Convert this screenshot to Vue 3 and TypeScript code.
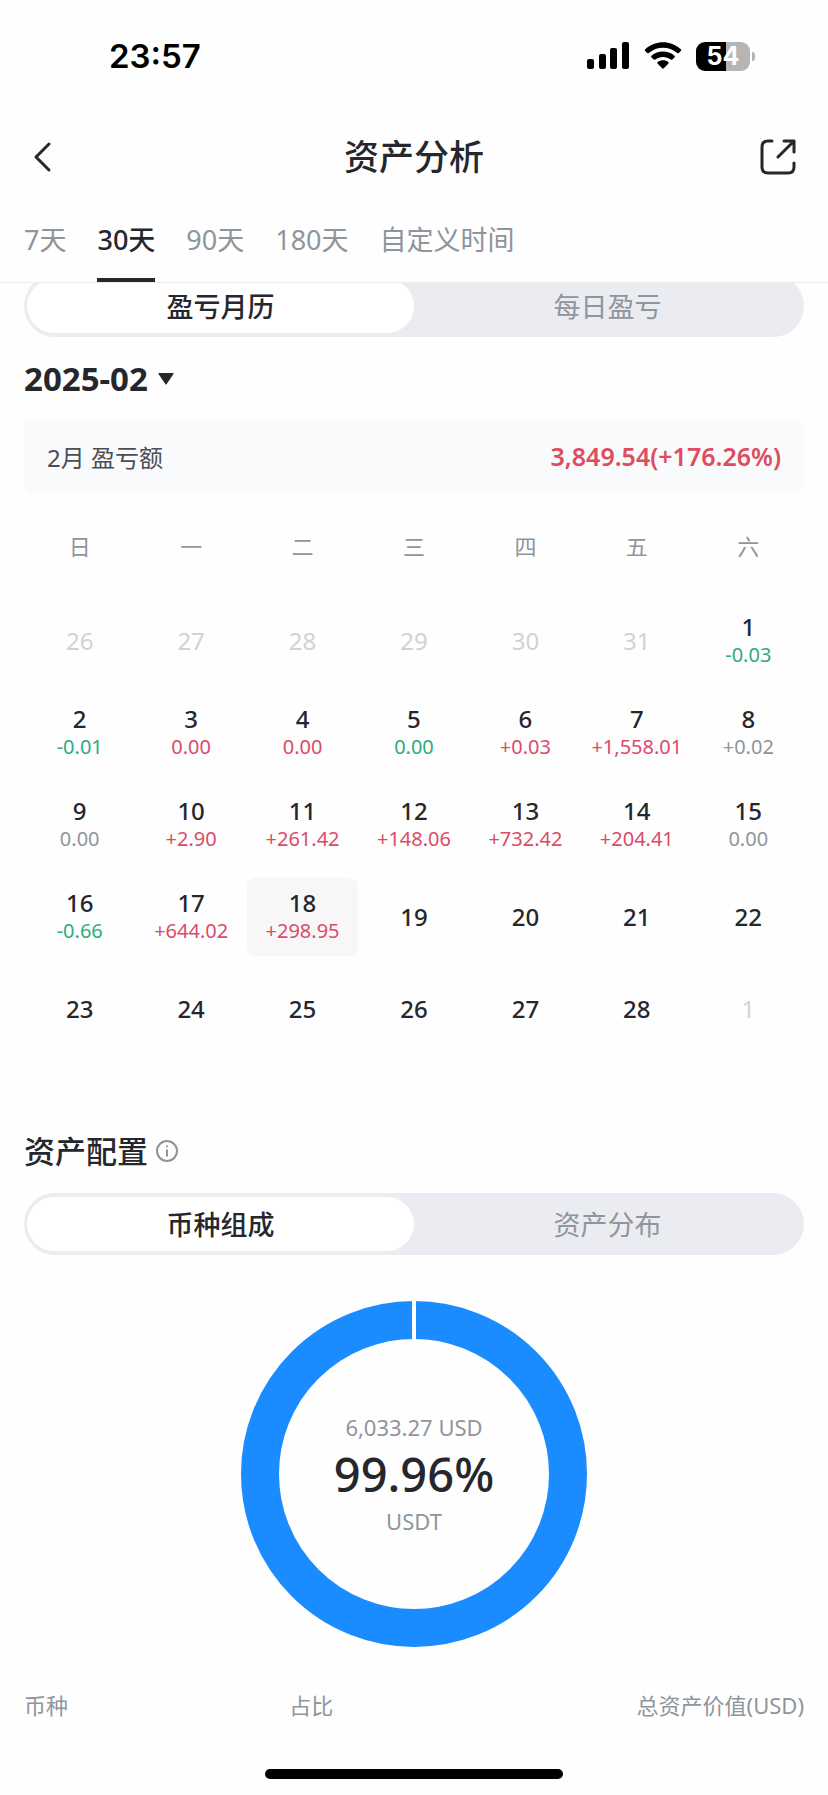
<script setup lang="ts">
import { ref } from 'vue'

type Tone = 'up' | 'down' | 'flat'
interface Day {
  day: number
  amount?: string
  tone?: Tone
  outside?: boolean
}

const ranges = ['7天', '30天', '90天', '180天', '自定义时间']
const activeRange = ref('30天')

const profitViews = ['盈亏月历', '每日盈亏']
const activeProfitView = ref('盈亏月历')

const assetViews = ['币种组成', '资产分布']
const activeAssetView = ref('币种组成')

const selectedDay = ref(18)
const weekdays = ['日', '一', '二', '三', '四', '五', '六']

const d = (day: number, amount?: string, tone?: Tone): Day => ({ day, amount, tone })
const out = (day: number): Day => ({ day, outside: true })

const weeks: Day[][] = [
  [out(26), out(27), out(28), out(29), out(30), out(31), d(1, '-0.03', 'down')],
  [
    d(2, '-0.01', 'down'), d(3, '0.00', 'up'), d(4, '0.00', 'up'), d(5, '0.00', 'down'),
    d(6, '+0.03', 'up'), d(7, '+1,558.01', 'up'), d(8, '+0.02', 'flat'),
  ],
  [
    d(9, '0.00', 'flat'), d(10, '+2.90', 'up'), d(11, '+261.42', 'up'), d(12, '+148.06', 'up'),
    d(13, '+732.42', 'up'), d(14, '+204.41', 'up'), d(15, '0.00', 'flat'),
  ],
  [d(16, '-0.66', 'down'), d(17, '+644.02', 'up'), d(18, '+298.95', 'up'), d(19), d(20), d(21), d(22)],
  [d(23), d(24), d(25), d(26), d(27), d(28), out(1)],
]

function select(cell: Day) {
  if (!cell.outside) selectedDay.value = cell.day
}
</script>

<template>
  <div class="page">
    <div class="status">
      <span class="clock">23:57</span>
      <div class="indicators">
        <svg width="43" height="28" viewBox="0 0 43 28" aria-hidden="true">
          <rect x="0" y="17" width="7" height="10" rx="2" />
          <rect x="12" y="12" width="7" height="15" rx="2" />
          <rect x="23" y="6" width="7" height="21" rx="2" />
          <rect x="35" y="0" width="7" height="27" rx="2" />
        </svg>
        <svg width="38" height="28" viewBox="0 0 38 28" aria-hidden="true">
          <path d="M1 8.8 Q0.4 8 1.2 7.3 C11.5-2 26.500-2 36.800 7.300 Q37.600 8 37 8.800 L34.800 11 Q34 11.600 33.200 11 C25 3.900 13 3.900 4.800 11 Q4 11.600 3.200 11 Z" />
          <path d="M7.300 15.200 Q6.700 14.400 7.500 13.700 C14.200 8.100 23.800 8.100 30.500 13.700 Q31.300 14.400 30.700 15.200 L28.300 17.500 Q27.500 18.100 26.800 17.500 C22.200 14 15.800 14 11.200 17.500 Q10.500 18.100 9.700 17.500 Z" />
          <path d="M13.500 21.500 Q12.900 20.700 13.700 20.100 C16.800 17.600 21.200 17.600 24.300 20.100 Q25.100 20.700 24.500 21.500 L19.800 26.300 Q19 27 18.200 26.300 Z" />
        </svg>
        <div class="battery">
          <span class="cell">54</span>
          <span class="nub"></span>
        </div>
      </div>
    </div>

    <header class="bar">
      <button class="icon-button" type="button" aria-label="返回">
        <svg width="36" height="36" viewBox="0 0 36 36">
          <path d="M17 5 L4 18 L17 31" />
        </svg>
      </button>
      <h1>资产分析</h1>
      <button class="icon-button" type="button" aria-label="分享">
        <svg width="36" height="36" viewBox="0 0 36 36">
          <path d="M12 2 H8 Q2 2 2 8 V28 Q2 34 8 34 H28 Q34 34 34 28 V24" />
          <path d="M24 2 H34 V13 M34 2 L18 18" />
        </svg>
      </button>
    </header>

    <nav class="ranges">
      <button
        v-for="range in ranges"
        :key="range"
        type="button"
        :class="{ active: range === activeRange }"
        @click="activeRange = range"
      >{{ range }}</button>
    </nav>

    <main class="content">
      <div class="segment tucked">
        <button
          v-for="view in profitViews"
          :key="view"
          type="button"
          :class="{ active: view === activeProfitView }"
          @click="activeProfitView = view"
        >{{ view }}</button>
      </div>

      <button class="month" type="button">
        2025-02
        <svg width="16" height="12" viewBox="0 0 16 12" aria-hidden="true">
          <path d="M1 0 H15 Q16 0 15.500 1 L8.700 11 Q8 12 7.300 11 L0.500 1 Q0 0 1 0 Z" />
        </svg>
      </button>

      <div class="summary">
        <span>2月 盈亏额</span>
        <strong>3,849.54(+176.26%)</strong>
      </div>

      <table class="calendar">
        <thead>
          <tr>
            <th v-for="name in weekdays" :key="name" scope="col">{{ name }}</th>
          </tr>
        </thead>
        <tbody>
          <tr v-for="(week, i) in weeks" :key="i">
            <td v-for="cell in week" :key="cell.day">
              <button
                type="button"
                class="day"
                :class="{ outside: cell.outside, selected: !cell.outside && cell.day === selectedDay }"
                @click="select(cell)"
              >
                <span>{{ cell.day }}</span>
                <span v-if="cell.amount" class="amount" :class="cell.tone">{{ cell.amount }}</span>
              </button>
            </td>
          </tr>
        </tbody>
      </table>

      <div class="section-title">
        <h2>资产配置</h2>
        <button type="button" aria-label="说明">
          <svg width="22" height="22" viewBox="0 0 22 22">
            <circle cx="11" cy="11" r="10" />
            <path d="M11 9.500 V16.500 M11 5.500 V7.300" />
          </svg>
        </button>
      </div>

      <div class="segment">
        <button
          v-for="view in assetViews"
          :key="view"
          type="button"
          :class="{ active: view === activeAssetView }"
          @click="activeAssetView = view"
        >{{ view }}</button>
      </div>

      <div class="donut">
        <svg viewBox="0 0 346 346" aria-hidden="true">
          <circle cx="173" cy="173" r="154" fill="none" stroke="#1a8cff" stroke-width="38" />
          <path d="M173 0 V42" stroke="#fff" stroke-width="4" />
        </svg>
        <div class="donut-label">
          <span>6,033.27 USD</span>
          <strong>99.96%</strong>
          <span>USDT</span>
        </div>
      </div>

      <table class="holdings">
        <thead>
          <tr>
            <th scope="col">币种</th>
            <th scope="col">占比</th>
            <th scope="col">总资产价值(USD)</th>
          </tr>
        </thead>
      </table>
    </main>

    <div class="home"></div>
  </div>
</template>

<style>
body {
  background: #fefefe;
}
</style>

<style scoped>
.page {
  display: flex;
  flex-direction: column;
  min-height: 100vh;
  box-sizing: border-box;
  padding-bottom: 16px;
  color: #25272c;
  font-family: "Noto Sans", "Noto Sans CJK SC", sans-serif;
}

button {
  margin: 0;
  padding: 0;
  border: 0;
  background: none;
  color: inherit;
  font: inherit;
  cursor: pointer;
}

svg {
  display: block;
}

.status {
  display: flex;
  align-items: center;
  justify-content: space-between;
  height: 112px;
  padding: 0 73px 0 109px;
  color: #000;
  font-family: Inter, "Liberation Sans", sans-serif;
}

.clock {
  font-size: 33px;
  font-weight: 600;
}

.indicators {
  display: flex;
  align-items: center;
  gap: 14px;
}

.battery {
  display: flex;
  align-items: center;
  gap: 2px;
}

.cell {
  width: 54px;
  height: 29px;
  border-radius: 9px;
  background: linear-gradient(90deg, #000 55%, #b5b5b5 55%);
  color: #fff;
  font-size: 25px;
  font-weight: 700;
  line-height: 29px;
  text-align: center;
}

.nub {
  width: 3px;
  height: 9px;
  border-radius: 0 3px 3px 0;
  background: #b5b5b5;
}

.bar {
  display: flex;
  align-items: center;
  justify-content: space-between;
  height: 90px;
  padding: 0 32px;
}

.icon-button svg {
  fill: none;
  stroke: #25272c;
  stroke-width: 3;
  stroke-linecap: round;
  stroke-linejoin: round;
}

h1,
h2 {
  margin: 0;
  font-weight: 500;
}

h1 {
  font-size: 35px;
  line-height: 48px;
}

.ranges {
  display: flex;
  gap: 31px;
  height: 80px;
  padding: 0 24px;
  border-bottom: 1px solid #ececee;
  color: #8f959c;
  font-size: 27px;
}

.ranges button {
  padding-bottom: 4px;
  border-bottom: 4px solid transparent;
}

.ranges .active {
  border-color: #25272c;
  color: #25272c;
  font-weight: 500;
}

.content {
  display: flex;
  flex-direction: column;
  align-items: stretch;
  overflow: hidden;
  padding: 0 24px;
}

.segment {
  display: grid;
  grid-template-columns: 1fr 1fr;
  box-sizing: border-box;
  height: 62px;
  padding: 4px 3px;
  border-radius: 31px;
  background: #ebecf2;
  color: #8f959c;
  font-size: 27px;
}

.segment.tucked {
  margin-top: -8px;
}

.segment button {
  padding-bottom: 2px;
  border-radius: 27px;
}

.segment .active {
  background: #fff;
  color: #25272c;
  font-weight: 500;
}

.month {
  display: flex;
  align-items: center;
  align-self: flex-start;
  gap: 10px;
  height: 83px;
  font-size: 33px;
  font-weight: 700;
}

.month svg {
  fill: #25272c;
}

.summary {
  display: flex;
  align-items: center;
  justify-content: space-between;
  height: 72px;
  padding: 0 23px;
  border-radius: 8px;
  background: #f8fafc;
  color: #4a4e58;
  font-size: 24px;
}

.summary strong {
  color: #df4c60;
  font-size: 25px;
  font-weight: 600;
}

.calendar {
  width: 100%;
  margin-top: 24px;
  border-spacing: 0 14px;
  table-layout: fixed;
}

.calendar th,
.calendar td {
  padding: 0;
}

.calendar th {
  height: 32px;
  padding-bottom: 26px;
  color: #8f959c;
  font-size: 22px;
  font-weight: 400;
  line-height: 32px;
}

.day {
  display: flex;
  flex-direction: column;
  align-items: center;
  justify-content: center;
  width: 100%;
  height: 78px;
  border-radius: 8px;
  font-size: 24px;
  font-weight: 500;
  line-height: 28px;
}

.calendar .outside {
  color: #d0d2d7;
  font-weight: 400;
}

.selected {
  background: #f7f7f8;
}

.amount {
  font-size: 20px;
  font-weight: 400;
}

.up {
  color: #dc4b67;
}

.down {
  color: #2fab7d;
}

.flat {
  color: #8f959c;
}

.section-title {
  display: flex;
  align-items: center;
  gap: 8px;
  margin: 65px 0 18px;
}

.section-title h2 {
  font-size: 31px;
  line-height: 48px;
}

.section-title svg {
  fill: none;
  stroke: #8f9297;
  stroke-width: 2;
}

.donut {
  display: grid;
  align-self: center;
  width: 346px;
  margin: 46px 0 42px;
}

.donut > * {
  grid-area: 1 / 1;
}

.donut-label {
  display: flex;
  flex-direction: column;
  align-items: center;
  justify-content: center;
  color: #8f959c;
  font-size: 22px;
  line-height: 32px;
}

.donut-label strong {
  color: #25272c;
  font-size: 47px;
  font-weight: 500;
  line-height: 62px;
}

.holdings {
  width: 100%;
  border-collapse: collapse;
  table-layout: fixed;
  color: #8f959c;
  font-size: 22px;
  line-height: 32px;
}

.holdings th {
  padding: 0;
  font-weight: 400;
  text-align: left;
}

.holdings th:first-child {
  width: 34%;
}

.holdings th:last-child {
  text-align: right;
}

.home {
  width: 36%;
  height: 10px;
  margin: auto auto 0;
  border-radius: 5px;
  background: #000;
}
</style>
